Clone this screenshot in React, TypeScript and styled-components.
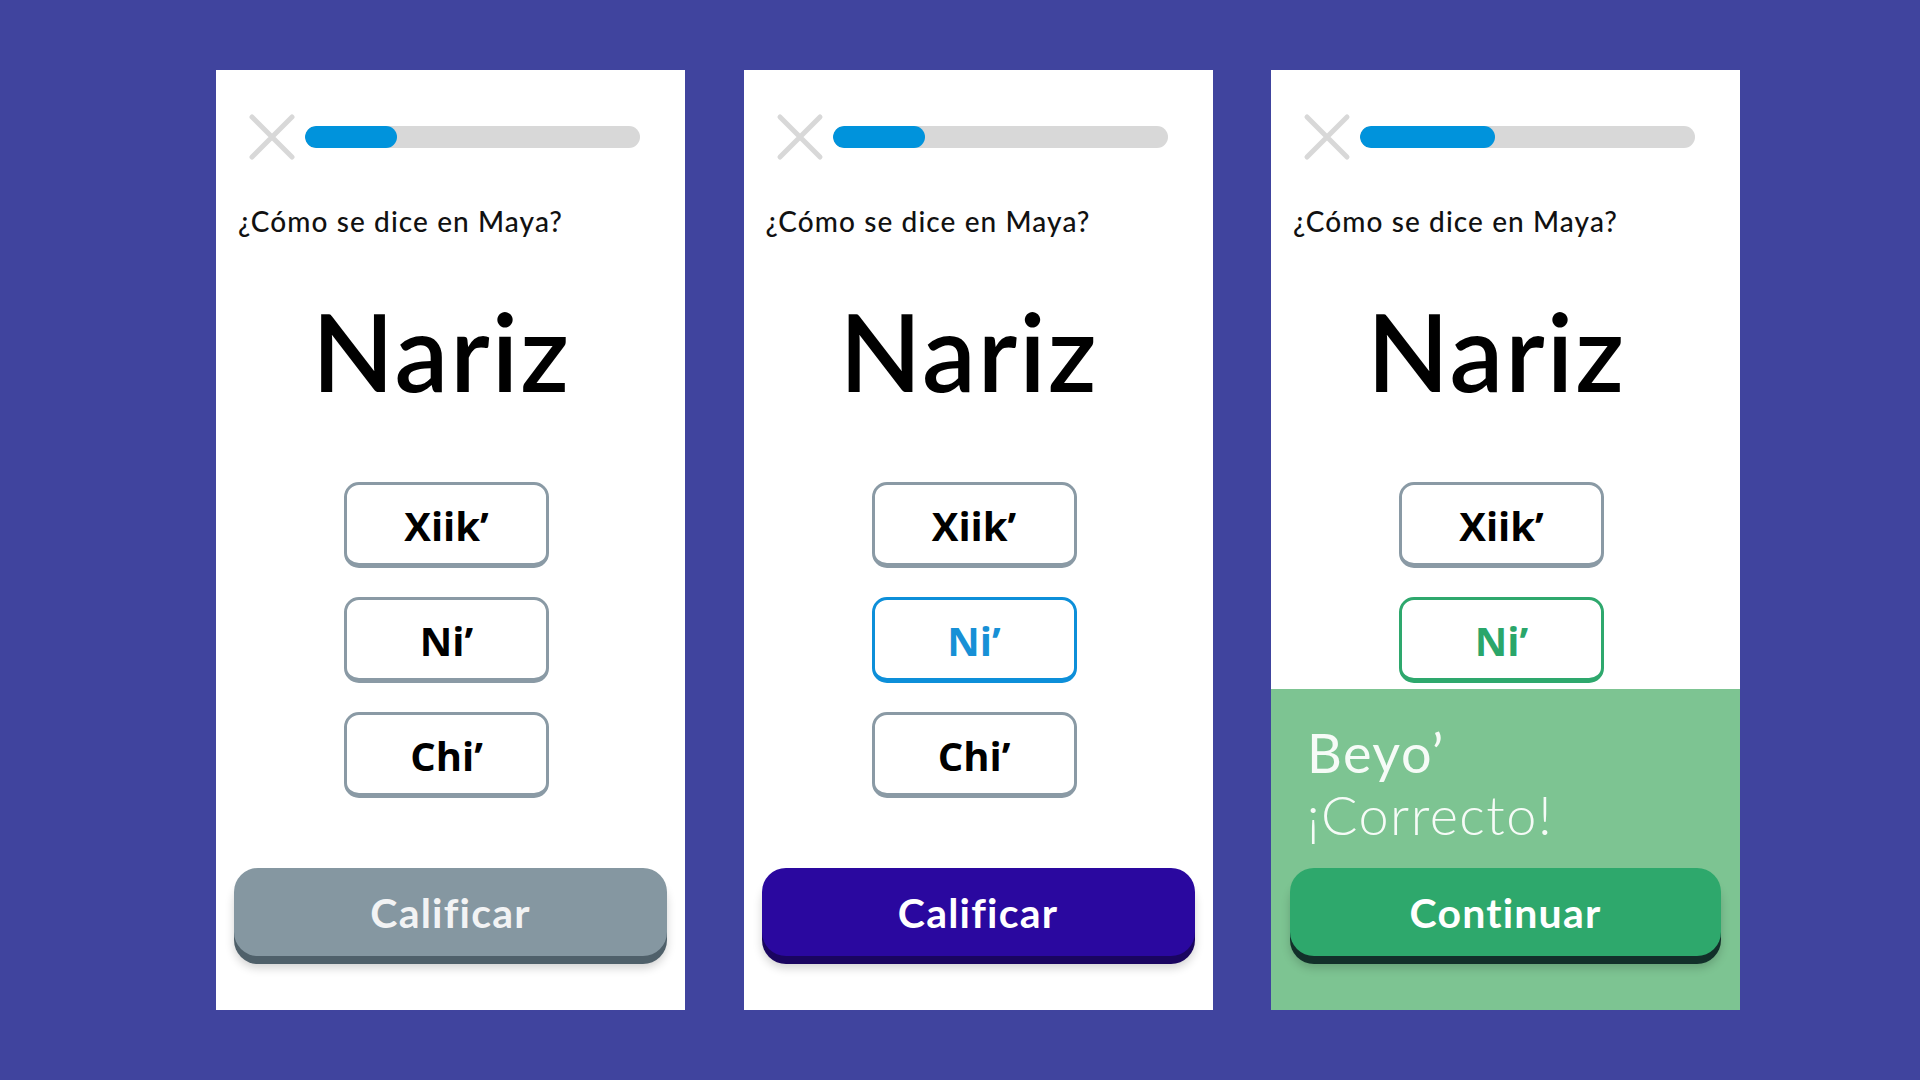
import React from "react";
import styled, { createGlobalStyle } from "styled-components";

const Global = createGlobalStyle`
  html, body { margin: 0; padding: 0; }
  body {
    background: #40449e;
    width: 1920px;
    height: 1080px;
    overflow: hidden;
    font-family: "Lato", "Noto Sans", sans-serif;
  }
`;

const Stage = styled.div`
  display: flex;
  gap: 58.5px;
  padding: 70px 0 0 216px;
  height: 1080px;
  box-sizing: border-box;
`;

const Panel = styled.section`
  width: 469px;
  height: 940px;
  background: #ffffff;
  display: flex;
  flex-direction: column;
  overflow: hidden;
`;

const Header = styled.div`
  display: flex;
  align-items: center;
  gap: 9px;
  padding: 43px 45px 0 32px;
`;

const CloseIcon = styled.svg`
  width: 48px;
  height: 48px;
  flex: none;
`;

const Track = styled.div`
  flex: 1;
  height: 22px;
  border-radius: 11px;
  background: #d8d8d8;
  overflow: hidden;
`;

const Fill = styled.div<{ $w: number }>`
  width: ${(p) => p.$w}px;
  height: 100%;
  border-radius: 11px;
  background: #0093dc;
`;

const Question = styled.p`
  margin: 43px 0 0 22px;
  font-size: 28px;
  line-height: 34px;
  letter-spacing: 1.1px;
  color: #111;
  font-weight: 500;
`;

const Word = styled.h1`
  margin: 59px 0 0;
  padding-right: 18px;
  text-align: center;
  font-size: 107px;
  line-height: 107px;
  font-weight: 600;
  letter-spacing: 2px;
  color: #000;
`;

const Options = styled.div`
  display: flex;
  flex-direction: column;
  align-items: center;
  gap: 29px;
  margin-top: 78px;
  padding-right: 8px;
`;

type OptState = "idle" | "selected" | "correct";
const optColors: Record<OptState, { border: string; text: string }> = {
  idle: { border: "#8a9aa5", text: "#000000" },
  selected: { border: "#0d8fd9", text: "#1790d6" },
  correct: { border: "#2ea86d", text: "#2aa66a" },
};

const Option = styled.div<{ $state: OptState }>`
  width: 205px;
  height: 86px;
  box-sizing: border-box;
  border: 3px solid ${(p) => optColors[p.$state].border};
  border-bottom-width: 5px;
  border-radius: 15px;
  display: flex;
  align-items: center;
  justify-content: center;
  font-family: "Open Sans", "Noto Sans", "DejaVu Sans", sans-serif;
  font-weight: 700;
  font-size: 40px;
  color: ${(p) => optColors[p.$state].text};
  padding-top: 2px;
`;

const Footer = styled.div`
  margin-top: auto;
  padding: 0 18px 54px;
`;

const Feedback = styled.div`
  margin-top: auto;
  background: #7dc492;
  padding: 33px 19px 54px;
`;

const FeedbackTitle = styled.div<{ $light?: boolean }>`
  color: #f6fbf7;
  font-size: 54px;
  line-height: 62px;
  letter-spacing: 1.5px;
  font-weight: ${(p) => (p.$light ? 300 : 400)};
  padding-left: 17px;
`;

type BtnKind = "disabled" | "active" | "success";
const btnColors: Record<BtnKind, { face: string; edge: string; text: string }> = {
  disabled: { face: "#8597a1", edge: "#4f606a", text: "#f2f3f4" },
  active: { face: "#2a089f", edge: "#1a0560", text: "#ffffff" },
  success: { face: "#2ea86c", edge: "#12302a", text: "#ffffff" },
};

const ActionButton = styled.button<{ $kind: BtnKind }>`
  display: block;
  width: 100%;
  height: 88px;
  margin-top: 22px;
  border: none;
  border-radius: 24px;
  background: ${(p) => btnColors[p.$kind].face};
  color: ${(p) => btnColors[p.$kind].text};
  box-shadow: 0 8px 0 ${(p) => btnColors[p.$kind].edge},
    0 12px 10px rgba(0, 0, 0, 0.18);
  font-family: "Lato", "Noto Sans", sans-serif;
  font-weight: 700;
  font-size: 41px;
  letter-spacing: 1.2px;
  padding: 0;
`;

const Close = () => (
  <CloseIcon viewBox="0 0 48 48">
    <path
      d="M4 4 L44 44 M44 4 L4 44"
      stroke="#d8d8d8"
      strokeWidth="5"
      strokeLinecap="round"
      fill="none"
    />
  </CloseIcon>
);

type PanelProps = {
  progress: number;
  options: { label: string; state: OptState }[];
  footer: React.ReactNode;
};

const QuizPanel = ({ progress, options, footer }: PanelProps) => (
  <Panel>
    <Header>
      <Close />
      <Track>
        <Fill $w={progress} />
      </Track>
    </Header>
    <Question>¿Cómo se dice en Maya?</Question>
    <Word>Nariz</Word>
    <Options>
      {options.map((o) => (
        <Option key={o.label} $state={o.state}>
          {o.label}
        </Option>
      ))}
    </Options>
    {footer}
  </Panel>
);

export default function App() {
  return (
    <>
      <Global />
      <Stage>
        <QuizPanel
          progress={92}
          options={[
            { label: "Xiik’", state: "idle" },
            { label: "Ni’", state: "idle" },
            { label: "Chi’", state: "idle" },
          ]}
          footer={
            <Footer>
              <ActionButton $kind="disabled">Calificar</ActionButton>
            </Footer>
          }
        />
        <QuizPanel
          progress={92}
          options={[
            { label: "Xiik’", state: "idle" },
            { label: "Ni’", state: "selected" },
            { label: "Chi’", state: "idle" },
          ]}
          footer={
            <Footer>
              <ActionButton $kind="active">Calificar</ActionButton>
            </Footer>
          }
        />
        <QuizPanel
          progress={135}
          options={[
            { label: "Xiik’", state: "idle" },
            { label: "Ni’", state: "correct" },
          ]}
          footer={
            <Feedback>
              <FeedbackTitle>Beyo’</FeedbackTitle>
              <FeedbackTitle $light>¡Correcto!</FeedbackTitle>
              <ActionButton $kind="success">Continuar</ActionButton>
            </Feedback>
          }
        />
      </Stage>
    </>
  );
}
